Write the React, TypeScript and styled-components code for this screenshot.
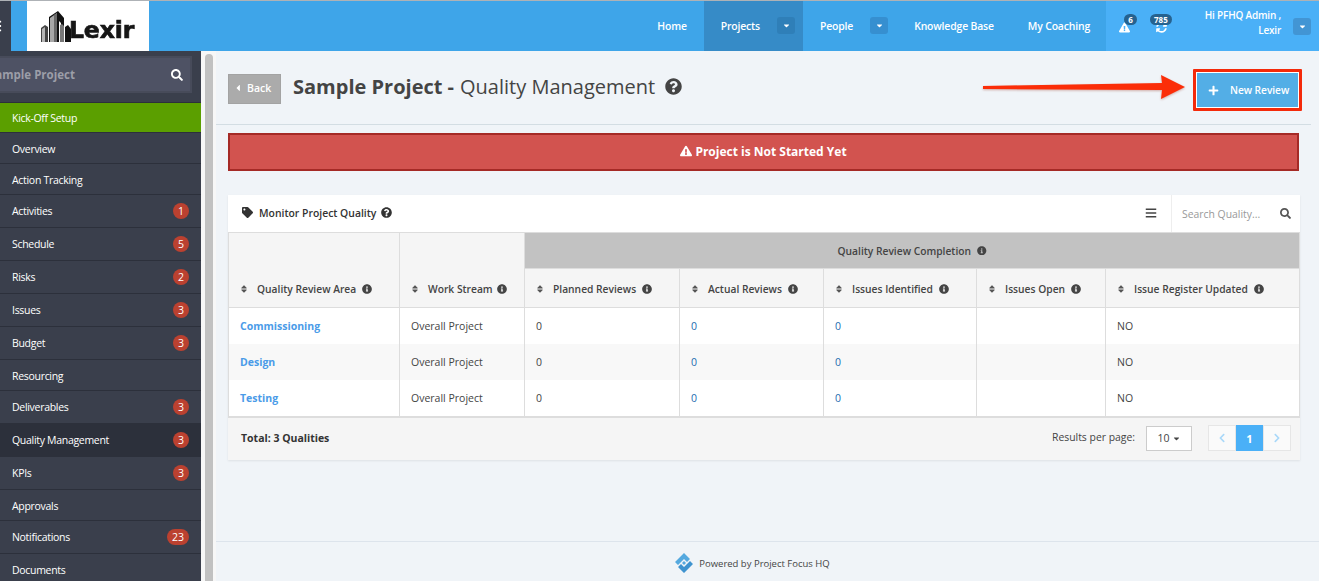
import React from 'react';
import styled, { createGlobalStyle } from 'styled-components';
import {
  FaBars, FaCaretDown, FaCaretLeft, FaChevronLeft, FaChevronRight, FaExclamationTriangle,
  FaInfoCircle, FaPlus, FaQuestionCircle, FaSearch, FaSort, FaSyncAlt, FaTag,
} from 'react-icons/fa';

const Global = createGlobalStyle`
  html, body { margin: 0; padding: 0; height: 100%; overflow: hidden; background: #f0f4f8; }
  body { font-family: "Open Sans", "Liberation Sans", sans-serif; font-size: 11px; color: #444; }
  * { box-sizing: border-box; }
`;

const Page = styled.div`
  width: 1319px; height: 581px; overflow: hidden;
  display: flex; flex-direction: column;
  border-top: 1px solid #aeb2b6;
`;
const TopBar = styled.header`
  height: 50px; flex: none; display: flex; align-items: stretch; background: #3ea5e9; color: #fff;
`;
const MenuStub = styled.div`
  width: 11px; background: #3a3f4c; display: flex; align-items: center; overflow: hidden; justify-content: flex-end;
  svg { flex: none; font-size: 14px; color: #fff; margin-right: 9px; }
`;
const LogoBox = styled.div`
  width: 122px; margin-left: 16px; background: #fff; display: flex; align-items: flex-end; padding: 0 0 9px 14px;
`;
const LogoArt = styled.svg`
  flex: none; filter: blur(0.3px);
`;
const LogoWord = styled.span`
  font-family: "DejaVu Sans", sans-serif; font-weight: 700; font-size: 23.5px; line-height: 23px; color: #161616;
  letter-spacing: -0.1px; margin-left: -2px; -webkit-text-stroke: 0.7px #161616; filter: blur(0.3px);
`;
const Nav = styled.nav`
  margin-left: auto; display: flex; align-items: stretch;
`;
const NavItem = styled.div<{ $active?: boolean; $pr?: number }>`
  display: flex; align-items: center; padding: 0 ${p => p.$pr ?? 17}px 1px 17px; font-size: 10.4px; font-weight: 600; letter-spacing: -.15px;
  color: #fff; background: ${p => (p.$active ? '#368bc7' : 'transparent')};
`;
const CaretBox = styled.span<{ $dark?: boolean }>`
  width: 18px; height: 17px; margin-left: 17px; border-radius: 3px; display: flex; align-items: center; justify-content: center;
  background: ${p => (p.$dark ? '#2f7fb8' : '#368fd0')}; font-size: 9px; color: #fff;
`;
const UserZone = styled.div`
  width: 213px; background: #4ab0f7; display: flex; align-items: center; position: relative;
`;
const Alerts = styled.div`
  display: flex; align-items: center; padding-left: 13px; gap: 26px; margin-top: 2px; width: 80px; flex: none;
`;
const AlertIcon = styled.span`
  position: relative; display: inline-flex; font-size: 11px; color: #fff;
`;
const AlertBadge = styled.span<{ $left: number }>`
  position: absolute; left: ${p => p.$left}px; top: -8px; height: 11px; min-width: 13px; padding: 0 4px;
  border-radius: 6px; background: #26628f; color: #fff; font-size: 8px; font-weight: 700; line-height: 11px; text-align: center;
`;
const UserName = styled.div`
  width: 96px; margin-left: -1px; text-align: right; font-size: 10px; font-weight: 600; line-height: 15px; margin-top: -6px; letter-spacing: -.2px;
`;
const UserCaret = styled(CaretBox)`
  margin-left: 12px; background: #4295d4;
`;

const Body = styled.div`
  flex: 1; display: flex; min-height: 0;
`;
const Sidebar = styled.aside`
  width: 201px; flex: none; background: #3a3f4c; overflow: hidden;
`;
const SearchWrap = styled.div`
  height: 52px; padding: 5px 9px 9px 0; border-bottom: 1px solid #2c303b;
`;
const SearchBox = styled.div`
  height: 37px; background: #4e5264; border: 2px solid #474b5a; border-left: 0; display: flex; align-items: center; justify-content: space-between; padding-right: 7px;
  color: #fff; svg { font-size: 12px; }
`;
const SearchText = styled.span`
  margin-left: -11px; font-size: 11.5px; font-weight: 700; color: #9c9ea8; white-space: nowrap;
`;
const SideRow = styled.div<{ $kind?: 'green' | 'dark'; $h: number; $push?: boolean }>`
  height: ${p => p.$h}px; display: flex; align-items: center; justify-content: space-between;
  padding: ${p => (p.$push ? 2 : 0)}px 12px 0; color: #fff; font-size: 10.5px; letter-spacing: -.3px;
  background: ${p => (p.$kind === 'green' ? '#5b9f00' : p.$kind === 'dark' ? '#2c303b' : 'transparent')};
  border-bottom: 1px solid #2c303b;
`;
const Count = styled.span`
  min-width: 16px; height: 16px; padding: 0 5px; border-radius: 8px; background: #bb4130; color: #fff;
  font-size: 10.5px; line-height: 16px; text-align: center; letter-spacing: 0;
`;
const ScrollStrip = styled.div`
  width: 15px; flex: none; background: #f7f7f7; padding: 3px 3px 0 4px;
`;
const ScrollThumb = styled.div`
  height: 100%; background: #c1c1c1; border-radius: 4px 4px 0 0;
`;

const Main = styled.main`
  flex: 1; min-width: 0; display: flex; flex-direction: column; background: #f0f4f8;
`;
const Head = styled.div`
  position: relative; height: 74px; flex: none; margin-right: 8px; padding: 23px 0 0 12px;
  border-bottom: 1px solid #d3dde3; display: flex; align-items: flex-start;
`;
const BackBtn = styled.div`
  width: 53px; height: 30px; background: #ababab; border: 1px solid #a3a3a3; color: #fff; font-size: 10.5px; font-weight: 600;
  display: flex; align-items: center; padding: 0 0 3px 4px; gap: 4px; svg { font-size: 10px; }
`;
const Title = styled.h1`
  margin: -1px 0 0 12px; font-size: 20px; line-height: 27px; font-weight: 400; color: #444; white-space: nowrap; display: flex; align-items: center;
  b { font-weight: 700; margin-right: 6px; } svg { font-size: 17px; margin-left: 10px; }
`;
const NewBtn = styled.div`
  position: absolute; left: 977px; top: 18px; width: 109px; height: 42px;
  border: 3px solid #f42a0a; border-radius: 1px; box-shadow: inset 0 0 0 1px #fff; background: #53aee6;
  color: #fff; font-size: 10.2px; font-weight: 600; letter-spacing: -.05px; display: flex; align-items: center; padding-left: 12px;
  svg { font-size: 11px; margin-right: 11px; }
`;
const Arrow = styled.svg`
  position: absolute; left: 767px; top: 24px; filter: drop-shadow(0 1px 1px rgba(150,40,20,.35));
`;
const AlertBar = styled.div`
  margin: 8px 20px 0 12px; height: 38px; background: #d2534f; border: 2px solid #a52a26; color: #fff; font-size: 12px; font-weight: 700;
  display: flex; align-items: center; justify-content: center; gap: 3px; padding-bottom: 2px; svg { font-size: 12px; }
`;
const Panel = styled.section`
  margin: 24px 19px 0 12px; background: #f5f5f5; box-shadow: 0 1px 2px rgba(0,0,0,.08);
`;
const Toolbar = styled.div`
  height: 37px; background: #fff; display: flex; align-items: center; color: #333; font-weight: 600; font-size: 10.4px;
`;
const ToolTitle = styled.div`
  display: flex; align-items: center; padding: 0 0 2px 14px; flex: 1; svg:first-child { font-size: 11px; margin-right: 6px; } svg:last-child { font-size: 11px; margin-left: 5px; }
`;
const ToolMenu = styled.span`
  font-size: 12px; color: #444; display: flex; margin: 0 14px 2px 0;
`;
const ToolSearch = styled.div`
  width: 129px; height: 37px; border-left: 1px solid #eee; display: flex; align-items: center; justify-content: space-between;
  padding: 0 9px 0 10px; color: #999; font-weight: 400; font-size: 10.4px; svg { color: #555; font-size: 11px; }
`;
const Table = styled.table`
  width: 1071px; table-layout: fixed; border-collapse: collapse; background: #fff; border: 1px solid #ddd; border-top-width: 1px; border-bottom-width: 2px;
`;
const Th = styled.th<{ $group?: boolean }>`
  height: ${p => (p.$group ? 36 : 38)}px; padding: 0 0 0 ${p => (p.$group ? 0 : 12)}px; text-align: left; vertical-align: ${p => (p.$group ? 'middle' : 'bottom')};
  background: ${p => (p.$group ? '#c2c2c2' : '#f5f5f5')}; border: 1px solid #ddd; font-weight: 600; font-size: 10.25px; color: #444; white-space: nowrap;
`;
const ThInner = styled.div<{ $tight?: boolean }>`
  height: 38px; padding-top: 2px; display: flex; align-items: center;
  > svg:first-child { font-size: 10px; margin-right: 10px; color: #555; width: 6px; flex: none; }
  > svg:last-child { font-size: 10px; margin-left: ${p => (p.$tight ? 4 : 6)}px; color: #444; flex: none; }
`;
const GroupInner = styled.div`
  display: flex; align-items: center; justify-content: center; gap: 6px; svg { font-size: 9.5px; }
`;
const Tr = styled.tr<{ $alt?: boolean }>`
  background: ${p => (p.$alt ? '#f8f8f8' : '#fff')};
  &:last-child td { height: 37px; }
`;
const Td = styled.td`
  height: 36px; padding: 0 0 0 11px; border-left: 1px solid #ddd; border-right: 1px solid #ddd; font-size: 10.5px; color: #444;
`;
const AreaLink = styled.span`
  color: #4a9be8; font-weight: 700; font-size: 10.5px;
`;
const Num = styled.span`
  color: #1c6cb0;
`;
const PanelFoot = styled.div`
  height: 42px; display: flex; align-items: center; padding: 0 9px 1px 13px; position: relative; background: #f5f5f5;
`;
const Total = styled.div`
  font-weight: 700; font-size: 10.5px; color: #333; margin-right: auto;
`;
const PerPage = styled.span`
  color: #444; font-size: 10.4px; margin-right: 11px; margin-top: -3px;
`;
const Select = styled.div`
  width: 46px; height: 25px; background: #fff; border: 1px solid #ccc; font-size: 10.5px; color: #444;
  display: flex; align-items: center; justify-content: center; gap: 2px; margin-right: 16px; svg { font-size: 9px; }
`;
const Pager = styled.div`
  display: flex; height: 26px;
`;
const PageBtn = styled.div<{ $on?: boolean }>`
  width: ${p => (p.$on ? 27 : 28)}px; display: flex; align-items: center; justify-content: center; font-weight: 700; font-size: 11px;
  background: ${p => (p.$on ? '#4ab0f7' : '#fafafa')}; color: ${p => (p.$on ? '#fff' : '#a9d8f9')};
  border: 1px solid ${p => (p.$on ? '#4ab0f7' : '#e6e6e6')}; svg { font-size: 10px; }
`;
const Foot = styled.footer`
  margin-top: auto; height: 40px; flex: none; border-top: 1px solid #dde4ec; display: flex; align-items: center; justify-content: center;
  font-size: 9.5px; color: #444; gap: 5px; padding: 2px 31px 0 0;
`;
const FootText = styled.span`
  margin-top: 1px;
`;

const rows: [string, number?, ('green' | 'dark')?][] = [
  ['Kick-Off Setup', undefined, 'green'], ['Overview'], ['Action Tracking'], ['Activities', 1], ['Schedule', 5], ['Risks', 2],
  ['Issues', 3], ['Budget', 3], ['Resourcing'], ['Deliverables', 3], ['Quality Management', 3, 'dark'], ['KPIs', 3],
  ['Approvals'], ['Notifications', 23], ['Documents'],
];
const heads = ['Planned Reviews', 'Actual Reviews', 'Issues Identified', 'Issues Open', 'Issue Register Updated'];
const areas = ['Commissioning', 'Design', 'Testing'];

const HeadCell = ({ label, tight }: { label: string; tight?: boolean }) => (
  <ThInner $tight={tight}><FaSort /><span>{label}</span><FaInfoCircle /></ThInner>
);

export default function App() {
  return (
    <Page>
      <Global />
      <TopBar>
        <MenuStub><FaBars /></MenuStub>
        <LogoBox>
          <LogoArt width="30" height="32" viewBox="0 0 30 32">
            <path d="M0 32V18l4-3 3 2v15z" fill="#444" />
            <path d="M1 32V19l3-2v15z" fill="#b5b5b5" />
            <path d="M8 32V7l9-6 6 7v24h-3V13l-2-2v21z" fill="#111" />
            <path d="M9 32V8l7-5v29z" fill="#a8a8a8" />
            <path d="M13 32V5l3-2v29z" fill="#6a6a6a" />
            <path d="M19 32V15l2-1 2 2v16z" fill="#777" />
            <path d="M24 32V17l3-2 3 4v13z" fill="#111" />
          </LogoArt>
          <LogoWord>Lexir</LogoWord>
        </LogoBox>
        <Nav>
          <NavItem>Home</NavItem>
          <NavItem $active $pr={8}>Projects<CaretBox $dark><FaCaretDown /></CaretBox></NavItem>
          <NavItem $pr={9}>People<CaretBox><FaCaretDown /></CaretBox></NavItem>
          <NavItem>Knowledge Base</NavItem>
          <NavItem $pr={16}>My Coaching</NavItem>
          <UserZone>
            <Alerts>
              <AlertIcon><FaExclamationTriangle /><AlertBadge $left={5}>6</AlertBadge></AlertIcon>
              <AlertIcon><FaSyncAlt /><AlertBadge $left={-6}>785</AlertBadge></AlertIcon>
            </Alerts>
            <UserName>Hi PFHQ Admin ,<br />Lexir</UserName>
            <UserCaret><FaCaretDown /></UserCaret>
          </UserZone>
        </Nav>
      </TopBar>
      <Body>
        <Sidebar>
          <SearchWrap>
            <SearchBox><SearchText>Sample Project</SearchText><FaSearch /></SearchBox>
          </SearchWrap>
          {rows.map(([label, n, kind], i) => (
            <SideRow key={label} $kind={kind} $h={i === 0 ? 30 : n ? 33 : 31} $push={i > 0 && !n}>
              <span>{label}</span>
              {n ? <Count>{n}</Count> : null}
            </SideRow>
          ))}
        </Sidebar>
        <ScrollStrip><ScrollThumb /></ScrollStrip>
        <Main>
          <Head>
            <BackBtn><FaCaretLeft />Back</BackBtn>
            <Title><b>Sample Project -</b> Quality Management <FaQuestionCircle /></Title>
            <Arrow width="204" height="26" viewBox="0 0 204 26">
              <polygon points="0,11 179,8 178,0 202,12 178,24 179,15 0,14" fill="#fb2d08" />
            </Arrow>
            <NewBtn><FaPlus />New Review</NewBtn>
          </Head>
          <AlertBar><FaExclamationTriangle />Project is Not Started Yet</AlertBar>
          <Panel>
            <Toolbar>
              <ToolTitle><FaTag /><span>Monitor Project Quality</span><FaQuestionCircle /></ToolTitle>
              <ToolMenu><FaBars /></ToolMenu>
              <ToolSearch><span>Search Quality...</span><FaSearch /></ToolSearch>
            </Toolbar>
            <Table>
              <colgroup>
                {[171, 125, 155, 144, 153, 129, 194].map((w, i) => <col key={i} style={{ width: w }} />)}
              </colgroup>
              <thead>
                <tr>
                  <Th rowSpan={2}><HeadCell label="Quality Review Area" /></Th>
                  <Th rowSpan={2}><HeadCell label="Work Stream" tight /></Th>
                  <Th $group colSpan={5}><GroupInner>Quality Review Completion <FaInfoCircle /></GroupInner></Th>
                </tr>
                <tr>{heads.map(h => <Th key={h}><HeadCell label={h} /></Th>)}</tr>
              </thead>
              <tbody>
                {areas.map((a, i) => (
                  <Tr key={a} $alt={i === 1}>
                    <Td><AreaLink>{a}</AreaLink></Td>
                    <Td>Overall Project</Td>
                    <Td>0</Td>
                    <Td><Num>0</Num></Td>
                    <Td><Num>0</Num></Td>
                    <Td />
                    <Td>NO</Td>
                  </Tr>
                ))}
              </tbody>
            </Table>
            <PanelFoot>
              <Total>Total: 3 Qualities</Total>
              <PerPage>Results per page:</PerPage>
              <Select>10 <FaCaretDown /></Select>
              <Pager>
                <PageBtn><FaChevronLeft /></PageBtn>
                <PageBtn $on>1</PageBtn>
                <PageBtn><FaChevronRight /></PageBtn>
              </Pager>
            </PanelFoot>
          </Panel>
          <Foot>
            <svg width="20" height="20" viewBox="0 0 20 20">
              <path d="M10 0 1 9l3 3 6-6 3 3 3-3z" fill="#55a9df" />
              <path d="M10 20l9-9-3-3-6 6-3-3-3 3z" fill="#3f93cf" />
              <path d="M10 8l2 2-2 2-2-2z" fill="#55a9df" />
            </svg>
            <FootText>Powered by Project Focus HQ</FootText>
          </Foot>
        </Main>
      </Body>
    </Page>
  );
}
